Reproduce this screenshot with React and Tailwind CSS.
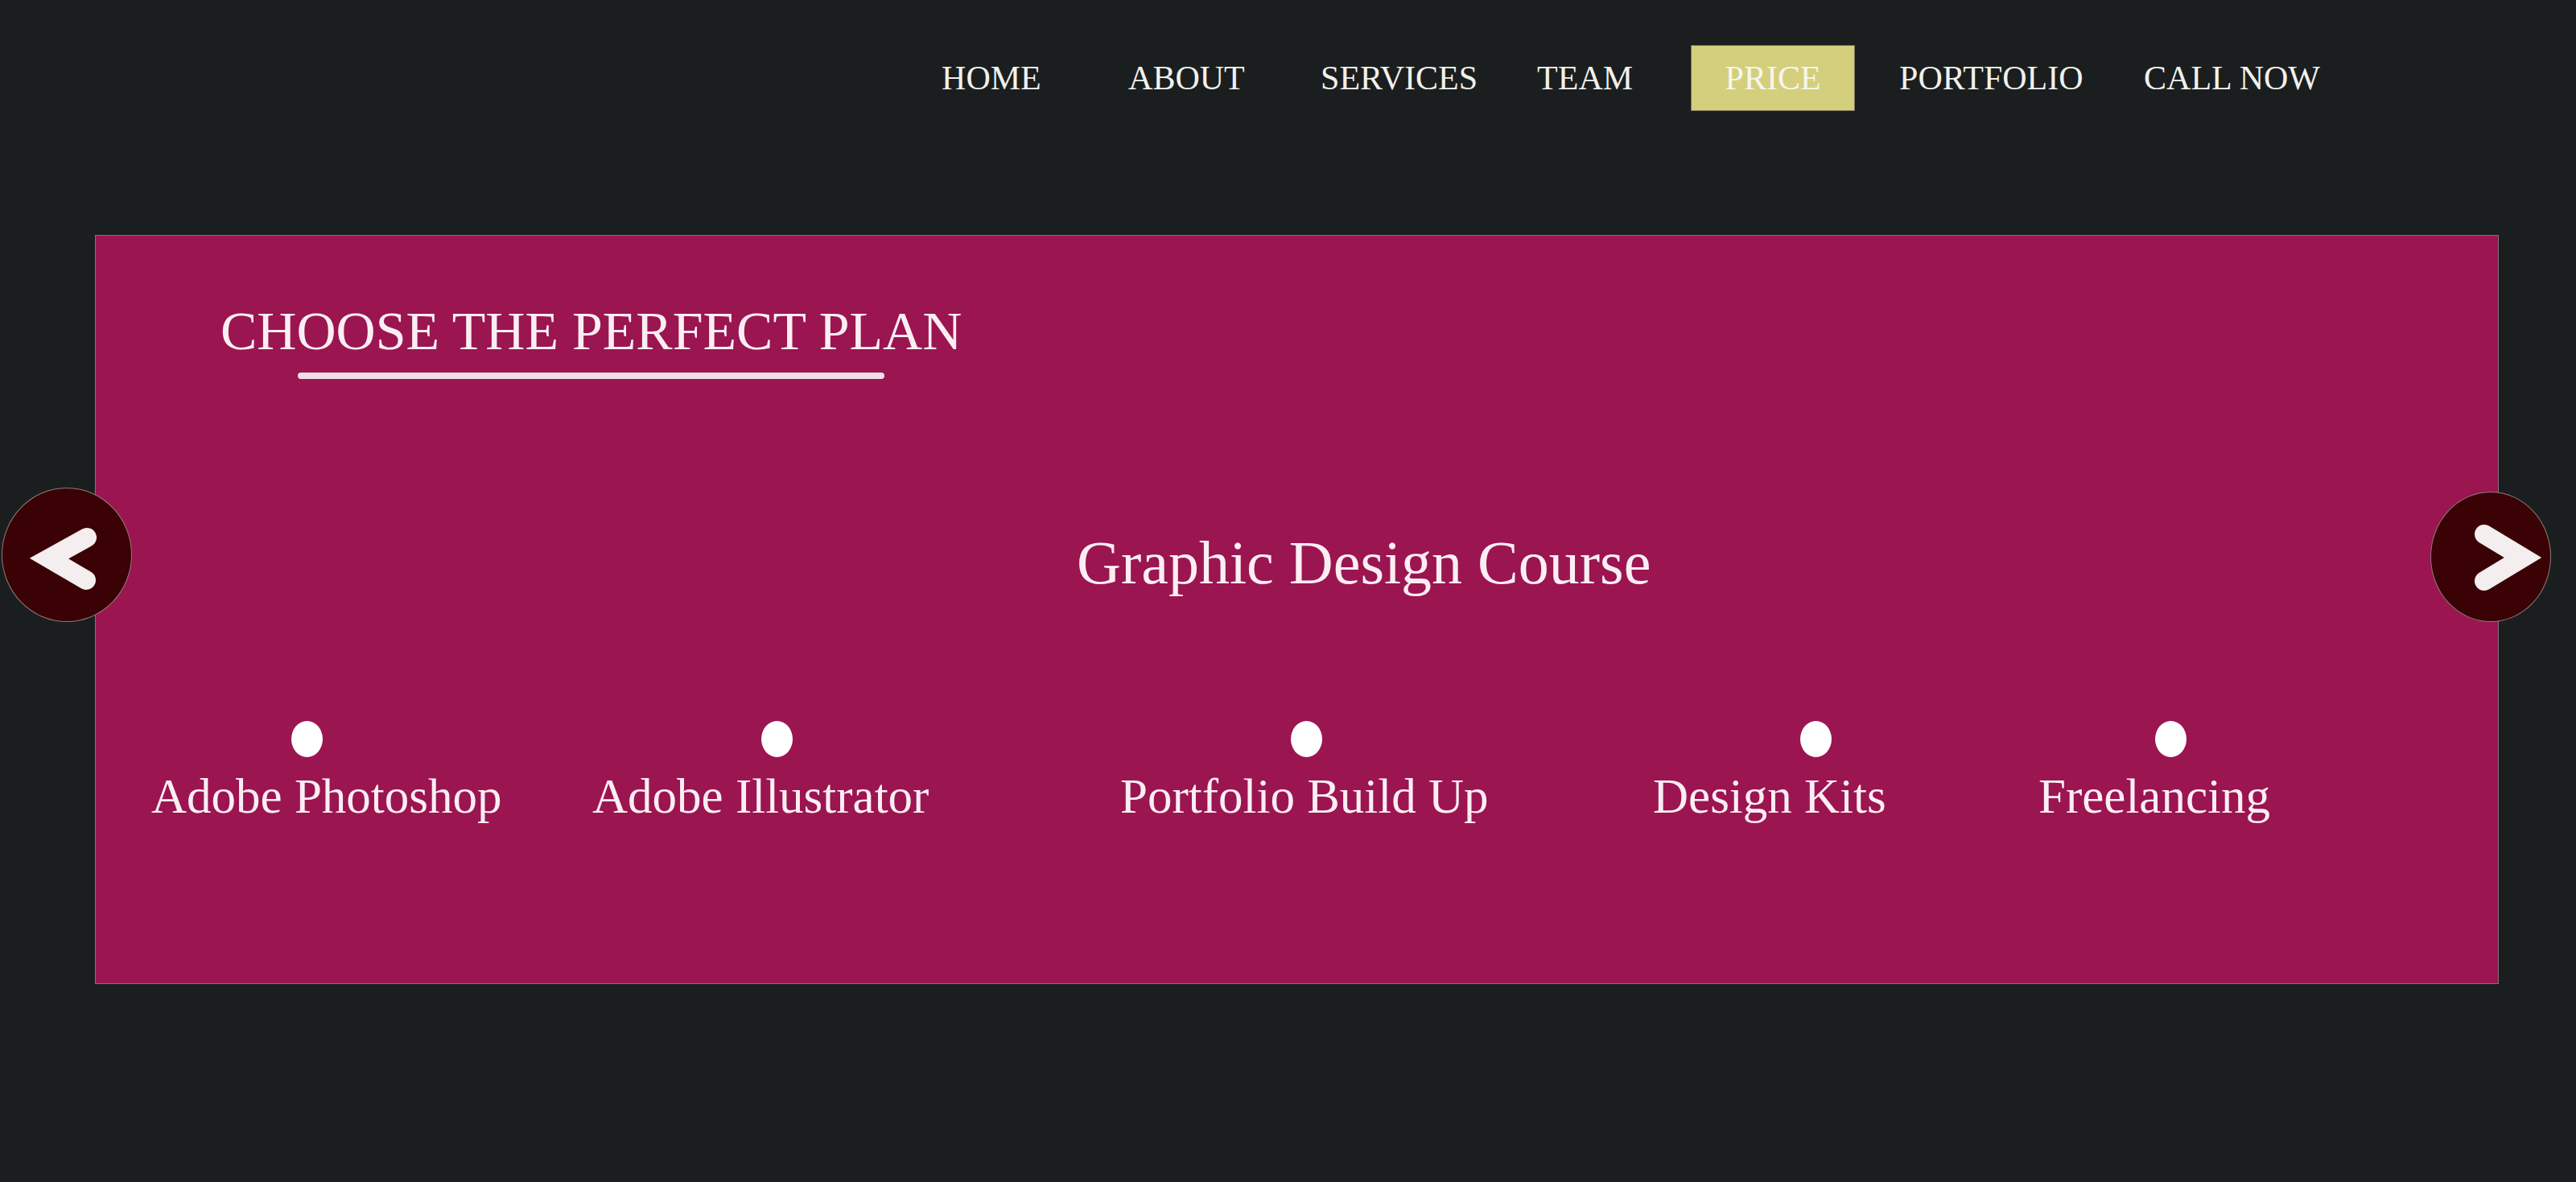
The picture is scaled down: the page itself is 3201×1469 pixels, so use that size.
import React from 'react';

const NAV = [
    {label: 'HOME', slot: 'w-[232px]'},
    {label: 'ABOUT', slot: 'w-[239px]'},
    {label: 'SERVICES', slot: 'w-[269px]'},
    {label: 'TEAM', slot: 'w-[191px]'},
    {label: 'PRICE', active: true},
    {label: 'PORTFOLIO', slot: 'ml-[55px] w-[304px]'},
    {label: 'CALL NOW', slot: ''},
];

// dot offsets are uneven in the design, kept as-is
const FEATURES = [
    {label: 'Adobe Photoshop', slot: 'w-[548px]', dot: 'ml-[174px]'},
    {label: 'Adobe Illustrator', slot: 'w-[656px]', dot: 'ml-[210px]'},
    {label: 'Portfolio Build Up', slot: 'w-[662px]', dot: 'ml-[212px]'},
    {label: 'Design Kits', slot: 'w-[479px]', dot: 'ml-[183px]'},
    {label: 'Freelancing', slot: '', dot: 'ml-[145px]'},
];

function ArrowButton({dir}) {
    const left = dir === 'left';
    return (
        <button
            className={`absolute flex items-center justify-center rounded-[50%] border border-[#8c7b7b] bg-[#3a0205] ${
                left ? 'left-[-117px] top-[313px] h-[167px] w-[162px]' : 'right-[-66px] top-[318px] h-[162px] w-[150px]'
            }`}
        >
            {left ? (
                <svg width="162" height="167" viewBox="0 0 162 167" className="absolute left-0 top-0">
                    <polyline points="105,61 58,87 104,114" fill="none" stroke="#f4eeee" strokeWidth="24" strokeLinecap="round" strokeLinejoin="miter" />
                </svg>
            ) : (
                <svg width="150" height="162" viewBox="0 0 150 162" className="absolute left-0 top-0">
                    <polyline points="66,52 114,81 66,110" fill="none" stroke="#f4eeee" strokeWidth="24" strokeLinecap="round" strokeLinejoin="miter" />
                </svg>
            )}
        </button>
    );
}

export default function App() {
    return (
        <div className="min-h-[1469px] bg-[#1b1e1f] font-['Liberation_Serif',serif] text-[#f1f1ec]">
            {/* Navbar */}
            <nav className="flex h-[138px] items-start justify-end pr-[318px] pt-[56px]">
                {NAV.map((item) =>
                    item.active ? (
                        <a
                            key={item.label}
                            className="flex h-[82px] w-[204px] items-center justify-center border border-[#77735a] bg-[#d4cf7c] text-[42px] leading-none text-[#f6f6ee]"
                        >
                            {item.label}
                        </a>
                    ) : (
                        <a key={item.label} className={`flex h-[82px] items-center text-[42px] leading-none ${item.slot}`}>
                            {item.label}
                        </a>
                    )
                )}
            </nav>

            {/* Pricing panel */}
            <section className="relative ml-[118px] mr-[96px] mt-[154px] h-[931px] border border-[#8a6f7c] bg-[#9b1551] text-[#fbeef3]">
                <div className="pl-[155px] pt-[84px]">
                    <div className="inline-flex flex-col items-center">
                        <h2 className="whitespace-nowrap text-[68px] leading-none">CHOOSE THE PERFECT PLAN</h2>
                        <div className="mt-[18px] h-[8px] w-[729px] rounded-full bg-[#f0dde5]" />
                    </div>
                </div>

                <h3 className="mt-[190px] whitespace-nowrap pl-[1219px] text-[76px] leading-none">Graphic Design Course</h3>

                <ul className="mt-[159px] flex pl-[69px]">
                    {FEATURES.map((f) => (
                        <li key={f.label} className={`flex shrink-0 flex-col items-start ${f.slot}`}>
                            <span className={`block h-[45px] w-[39px] rounded-[50%] bg-white ${f.dot}`} />
                            <span className="mt-[18px] whitespace-nowrap text-[61px] leading-none">{f.label}</span>
                        </li>
                    ))}
                </ul>

                <ArrowButton dir="left" />
                <ArrowButton dir="right" />
            </section>
        </div>
    );
}
